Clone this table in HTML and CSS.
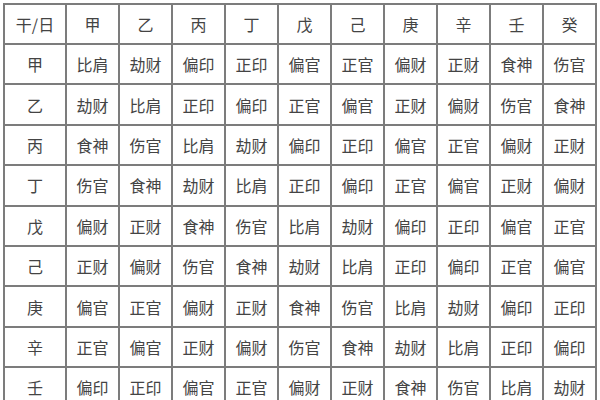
FILE: index.html
```html
<!DOCTYPE html>
<html lang="zh-CN">
<head>
<meta charset="utf-8">
<title>十神表</title>
<link rel="stylesheet" href="styles.css">
</head>
<body>
<div class="grid">
  <div class="c">干/日</div><div class="c">甲</div><div class="c">乙</div><div class="c">丙</div><div class="c">丁</div><div class="c">戊</div><div class="c">己</div><div class="c">庚</div><div class="c">辛</div><div class="c">壬</div><div class="c">癸</div>
  <div class="c">甲</div><div class="c">比肩</div><div class="c">劫财</div><div class="c">偏印</div><div class="c">正印</div><div class="c">偏官</div><div class="c">正官</div><div class="c">偏财</div><div class="c">正财</div><div class="c">食神</div><div class="c">伤官</div>
  <div class="c">乙</div><div class="c">劫财</div><div class="c">比肩</div><div class="c">正印</div><div class="c">偏印</div><div class="c">正官</div><div class="c">偏官</div><div class="c">正财</div><div class="c">偏财</div><div class="c">伤官</div><div class="c">食神</div>
  <div class="c">丙</div><div class="c">食神</div><div class="c">伤官</div><div class="c">比肩</div><div class="c">劫财</div><div class="c">偏印</div><div class="c">正印</div><div class="c">偏官</div><div class="c">正官</div><div class="c">偏财</div><div class="c">正财</div>
  <div class="c">丁</div><div class="c">伤官</div><div class="c">食神</div><div class="c">劫财</div><div class="c">比肩</div><div class="c">正印</div><div class="c">偏印</div><div class="c">正官</div><div class="c">偏官</div><div class="c">正财</div><div class="c">偏财</div>
  <div class="c">戊</div><div class="c">偏财</div><div class="c">正财</div><div class="c">食神</div><div class="c">伤官</div><div class="c">比肩</div><div class="c">劫财</div><div class="c">偏印</div><div class="c">正印</div><div class="c">偏官</div><div class="c">正官</div>
  <div class="c">己</div><div class="c">正财</div><div class="c">偏财</div><div class="c">伤官</div><div class="c">食神</div><div class="c">劫财</div><div class="c">比肩</div><div class="c">正印</div><div class="c">偏印</div><div class="c">正官</div><div class="c">偏官</div>
  <div class="c">庚</div><div class="c">偏官</div><div class="c">正官</div><div class="c">偏财</div><div class="c">正财</div><div class="c">食神</div><div class="c">伤官</div><div class="c">比肩</div><div class="c">劫财</div><div class="c">偏印</div><div class="c">正印</div>
  <div class="c">辛</div><div class="c">正官</div><div class="c">偏官</div><div class="c">正财</div><div class="c">偏财</div><div class="c">伤官</div><div class="c">食神</div><div class="c">劫财</div><div class="c">比肩</div><div class="c">正印</div><div class="c">偏印</div>
  <div class="c">壬</div><div class="c">偏印</div><div class="c">正印</div><div class="c">偏官</div><div class="c">正官</div><div class="c">偏财</div><div class="c">正财</div><div class="c">食神</div><div class="c">伤官</div><div class="c">比肩</div><div class="c">劫财</div>
</div>
</body>
</html>
```

FILE: styles.css
```css
html, body {
  margin: 0;
  padding: 0;
  background: #ffffff;
  overflow: hidden;
}
body {
  font-family: "Noto Sans CJK SC", "Noto Sans", sans-serif;
  color: #444444;
}
.grid {
  display: grid;
  grid-template-columns: 62px repeat(10, 53px);
  grid-template-rows: 40px;
  grid-auto-rows: 40.4px;
  margin: 3px 0 0 3px;
  width: max-content;
  border: 1px solid #7c7c7c;
}
.c {
  box-sizing: border-box;
  border: 1px solid #7c7c7c;
  display: flex;
  align-items: center;
  justify-content: center;
  font-size: 16px;
  line-height: 1;
  font-weight: 400;
}
```
